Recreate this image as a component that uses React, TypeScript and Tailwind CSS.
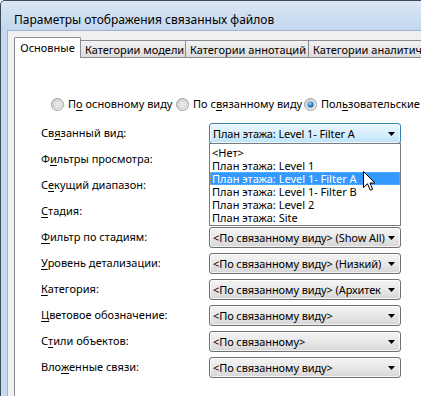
import React from "react";

type Row = {
  label: React.ReactNode;
  value: string;
  focused?: boolean;
};

// underline helper for accelerator keys
const U = ({ c }: { c: string }) => <span className="underline underline-offset-2">{c}</span>;

const rows: Row[] = [
  { label: <>Св<U c="я" />занный вид:</>, value: "План этажа: Level 1- Filter A", focused: true },
  { label: <>Ф<U c="и" />льтры просмотра:</>, value: "" },
  { label: <>С<U c="е" />кущий диапазон:</>, value: "" },
  { label: <><U c="С" />тадия:</>, value: "" },
  { label: <><U c="Ф" />ильтр по стадиям:</>, value: "<По связанному виду> (Show All)" },
  { label: <><U c="У" />ровень детализации:</>, value: "<По связанному виду> (Низкий)" },
  { label: <><U c="К" />атегория:</>, value: "<По связанному виду> (Архитек" },
  { label: <><U c="Ц" />ветовое обозначение:</>, value: "<По связанному виду>" },
  { label: <>С<U c="т" />или объектов:</>, value: "<По связанному>" },
  { label: <>Вло<U c="ж" />енные связи:</>, value: "<По связанному виду>" },
];

const listItems = [
  "<Нет>",
  "План этажа: Level 1",
  "План этажа: Level 1- Filter A",
  "План этажа: Level 1- Filter B",
  "План этажа: Level 2",
  "План этажа: Site",
];

const Arrow = () => (
  <svg width="7" height="4" viewBox="0 0 7 4" className="shrink-0">
    <path d="M0 0H7L3.5 4Z" fill="#000" />
  </svg>
);

const Radio = ({ checked }: { checked?: boolean }) => (
  <svg width="13" height="13" viewBox="0 0 13 13" className="shrink-0">
    <defs>
      <linearGradient id={checked ? "rg1" : "rg0"} x1="0" y1="0" x2="1" y2="1">
        <stop offset="0" stopColor="#d0d0d0" />
        <stop offset="1" stopColor="#ffffff" />
      </linearGradient>
      <radialGradient id="dot" cx="0.4" cy="0.35" r="0.7">
        <stop offset="0" stopColor="#b8e2fb" />
        <stop offset="0.5" stopColor="#2f8fd8" />
        <stop offset="1" stopColor="#0d4c8a" />
      </radialGradient>
    </defs>
    <circle cx="6.5" cy="6.5" r="6" fill={`url(#${checked ? "rg1" : "rg0"})`} stroke="#9a9a9a" />
    <circle cx="6.5" cy="6.5" r="4" fill="#e6e6e6" stroke="#c8c8c8" strokeWidth="0.8" />
    {checked && <circle cx="6.5" cy="6.5" r="3" fill="url(#dot)" />}
  </svg>
);

const Combo = ({ value, focused }: { value: string; focused?: boolean }) => (
  <div
    className={`w-[192px] h-[21px] shrink-0 rounded-[3px] border flex items-center pl-[3px] pr-[5px] shadow-[inset_0_0_0_1px_rgba(255,255,255,0.7)] ${
      focused
        ? "border-[#3c7fb1] bg-gradient-to-b from-[#eaf6fd] via-[#d7effc] to-[#bde3f8]"
        : "border-[#707070] bg-gradient-to-b from-[#f4f4f4] via-[#e8e8e8] to-[#d6d6d6]"
    }`}
  >
    <span className="flex-1 whitespace-nowrap overflow-hidden leading-[15px] tracking-[-0.1px]">{value}</span>
    <Arrow />
  </div>
);

export default function App() {
  return (
    <div className="w-[421px] h-[396px] overflow-hidden flex flex-col bg-[#c4d8ee] border-l border-t border-[#3e4a58] rounded-tl-[5px] text-[11px] text-black font-['Noto_Sans',sans-serif]">
      {/* title bar */}
      <div className="h-[29px] shrink-0 bg-gradient-to-b from-[#dbe7f4] to-[#c3d7ee] pl-[13px] pt-[11px] leading-[16px] text-[12px] text-[#000]">
        Параметры отображения связанных файлов
      </div>

      <div className="flex-1 flex pl-[6px]">
        <div className="flex-1 flex flex-col bg-[#f0f0f0] border-l border-t border-[#9fb3cb] pl-[6px] pt-[6px]">
          {/* tabs */}
          <div className="flex items-end h-[20px] shrink-0">
            <div className="relative z-10 -mb-px w-[67px] h-[21px] shrink-0 bg-white border border-b-0 border-[#898c95] rounded-t-[2px] flex justify-center pt-[1px] leading-[18px]">
              Основные
            </div>
            <div className="w-[105px] h-[17px] shrink-0 border border-b-0 border-l-0 border-[#898c95] bg-gradient-to-b from-[#f3f3f3] to-[#dcdcdc] pl-[4px] pt-[1px] leading-[16px] whitespace-nowrap">
              Категории модели
            </div>
            <div className="w-[123px] h-[17px] shrink-0 border border-b-0 border-l-0 border-[#898c95] bg-gradient-to-b from-[#f3f3f3] to-[#dcdcdc] pl-[4px] pt-[1px] leading-[16px] whitespace-nowrap">
              Категории аннотаций
            </div>
            <div className="w-[140px] h-[17px] shrink-0 border border-b-0 border-l-0 border-[#898c95] bg-gradient-to-b from-[#f3f3f3] to-[#dcdcdc] pl-[4px] pt-[1px] leading-[16px] whitespace-nowrap overflow-hidden">
              Категории аналитических моделей
            </div>
          </div>

          {/* panel */}
          <div className="relative flex-1 bg-white border-l border-t border-[#898c95] flex flex-col">
            <div className="flex items-center h-[14px] mt-[39px] pl-[36px] whitespace-nowrap">
              <div className="w-[125px] flex items-center gap-[4px] shrink-0">
                <Radio />
                <span>П<U c="о" /> основному виду</span>
              </div>
              <div className="w-[128px] flex items-center gap-[4px] shrink-0">
                <Radio />
                <span>По с<U c="в" />язанному виду</span>
              </div>
              <div className="flex items-center gap-[4px] shrink-0">
                <Radio checked />
                <span>Пол<U c="ь" />зовательские</span>
              </div>
            </div>

            <div className="flex flex-col gap-[5px] mt-[12px]">
              {rows.map((r, i) => (
                <div key={i} className="flex items-center h-[21px] pl-[26px]">
                  <div className="w-[168px] shrink-0 whitespace-nowrap">{r.label}</div>
                  <Combo value={r.value} focused={r.focused} />
                </div>
              ))}
            </div>

            {/* open dropdown list */}
            <div className="absolute left-[194px] top-[85px] w-[192px] bg-white border border-[#7a7a7a] pt-[2px] pb-[1px] z-20">
              {listItems.map((it, i) => (
                <div
                  key={i}
                  className={`h-[13px] leading-[13px] pl-[2px] whitespace-nowrap ${
                    i === 2 ? "bg-[#3399ff] text-white outline outline-1 outline-dotted outline-offset-[-1px] outline-[#d9a45a]" : ""
                  }`}
                >
                  {it}
                </div>
              ))}
            </div>

            {/* mouse cursor */}
            <svg
              width="13"
              height="21"
              viewBox="0 0 13 21"
              className="absolute left-[348px] top-[113px] z-30"
            >
              <path
                d="M0.5 0.5V16.5L4.5 12.8L7.2 19.2L9.6 18.2L7 12H12Z"
                fill="#fff"
                stroke="#000"
                strokeLinejoin="miter"
              />
            </svg>
          </div>
        </div>
      </div>
    </div>
  );
}
